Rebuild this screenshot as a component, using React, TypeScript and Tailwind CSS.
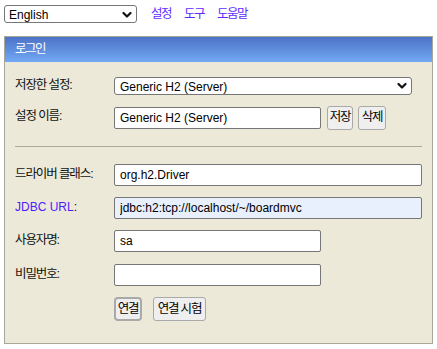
import { ReactNode } from 'react'

const font = { fontFamily: '"Liberation Sans", "Noto Sans CJK KR", sans-serif' }

function Chevron() {
  return (
    <svg width="10" height="7" viewBox="0 0 10 7" className="absolute right-[5px] top-1/2 -translate-y-1/2 pointer-events-none">
      <polyline points="1.5,1.5 5,5 8.5,1.5" fill="none" stroke="#111" strokeWidth="2.2" strokeLinecap="round" strokeLinejoin="round" />
    </svg>
  )
}

function Row({ label, children, className = '' }: { label: ReactNode; children: ReactNode; className?: string }) {
  return (
    <div className={`flex items-center ${className}`}>
      <div className="w-[99px] shrink-0 leading-[14px] pb-[3px] tracking-[-1.1px] text-[12.5px] text-[#111]">{label}</div>
      {children}
    </div>
  )
}

function Field({ value = '', wide = false, tint = false }: { value?: string; wide?: boolean; tint?: boolean }) {
  return (
    <input
      readOnly
      value={value}
      className={`h-[22px] ${wide ? 'w-[308px]' : 'w-[207px]'} ${tint ? 'bg-[#e8f0fe]' : 'bg-white'} border border-[#767676] rounded-[2px] pl-[5px] text-[12px] text-black outline-none`}
      style={font}
    />
  )
}

function SmallButton({ children, className = '' }: { children: ReactNode; className?: string }) {
  return (
    <button
      className={`h-[24px] flex items-center justify-center whitespace-nowrap bg-[#efefef] border border-[#a9a9a9] rounded-[3px] px-0 text-[12.5px] tracking-[-1.2px] text-black ${className}`}
      style={font}
    >
      {children}
    </button>
  )
}

export default function App() {
  return (
    <div className="w-[437px] h-[349px] bg-white text-[12px]" style={font}>
      {/* top bar */}
      <div className="flex items-center pt-[6px] pl-[4px] h-[23px]">
        <div className="relative">
          <select className="appearance-none w-[133px] h-[18px] border border-[#767676] rounded-[3px] bg-white pl-[4px] text-[12px] text-black outline-none" style={font} defaultValue="en">
            <option value="en">English</option>
          </select>
          <Chevron />
        </div>
        <div className="flex gap-[13px] ml-[14px] text-[12.5px] text-[#5f2cff] tracking-[-1.5px]">
          <a>설정</a>
          <a>도구</a>
          <a>도움말</a>
        </div>
      </div>

      {/* login panel */}
      <div className="mt-[13px] ml-[4px] w-[429px] border border-[#a8a89a] bg-[#ece9d8]">
        <div className="h-[25px] bg-gradient-to-b from-[#4d72c6] to-[#72a9f4] flex items-center pl-[10px] text-[12.5px] text-white tracking-[-1.5px]">
          로그인
        </div>
        <div className="pl-[10px] pt-[15px] pb-[22px]">
          <Row label="저장한 설정:" className="h-[18px]">
            <div className="relative">
              <select className="appearance-none w-[298px] h-[18px] border border-[#767676] rounded-[3px] bg-white pl-[5px] text-[12px] text-black outline-none" style={font} defaultValue="h2">
                <option value="h2">Generic H2 (Server)</option>
              </select>
              <Chevron />
            </div>
          </Row>
          <Row label="설정 이름:" className="mt-[11px] h-[23px]">
            <Field value="Generic H2 (Server)" />
            <SmallButton className="ml-[6px] w-[26px]">저장</SmallButton>
            <SmallButton className="ml-[5px] w-[28px]">삭제</SmallButton>
          </Row>
          <div className="mt-[17px] w-[407px] h-px bg-[#a9a9a0]" />
          <Row label="드라이버 클래스:" className="mt-[17px] h-[22px]">
            <Field value="org.h2.Driver" wide />
          </Row>
          <Row
            label={
              <>
                <span className="text-[#4f1bff] tracking-normal text-[12px]">JDBC URL</span>:
              </>
            }
            className="mt-[11px] h-[22px]"
          >
            <Field value="jdbc:h2:tcp://localhost/~/boardmvc" wide tint />
          </Row>
          <Row label="사용자명:" className="mt-[11px] h-[22px]">
            <Field value="sa" />
          </Row>
          <Row label="비밀번호:" className="mt-[12px] h-[22px]">
            <Field />
          </Row>
          <div className="flex mt-[11px] ml-[99px]">
            <SmallButton className="w-[28px] border-2 border-[#1a3fd6] rounded-[4px]">연결</SmallButton>
            <SmallButton className="ml-[11px] w-[53px]">연결 시험</SmallButton>
          </div>
        </div>
      </div>
    </div>
  )
}
